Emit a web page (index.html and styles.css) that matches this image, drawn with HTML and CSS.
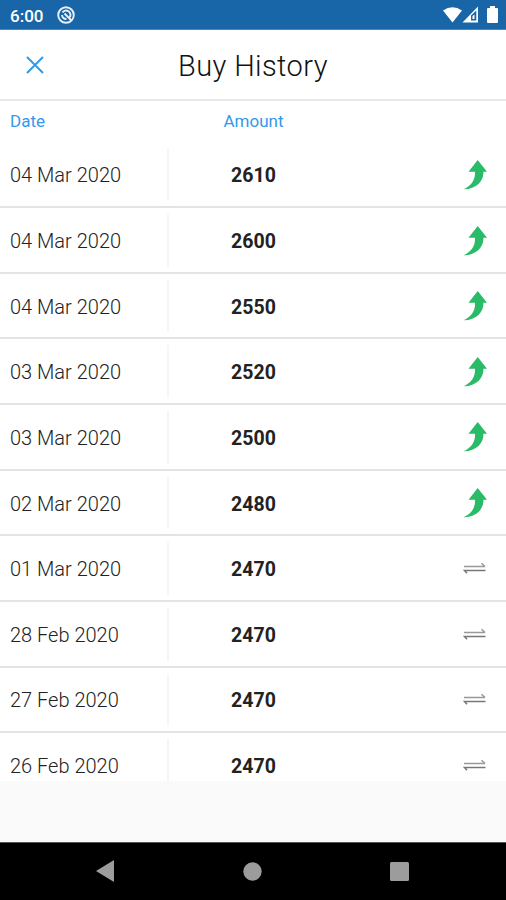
FILE: index.html
```html
<!DOCTYPE html>
<html lang="en">

<head>
    <meta charset="UTF-8">
    <meta name="viewport" content="width=device-width, initial-scale=1.0">
    <title>Buy History</title>
    <link rel="stylesheet" href="styles.css">
</head>

<body>
    <svg class="sprite" width="0" height="0">
        <symbol id="up" viewBox="0 0 26 32">
            <path d="M14.700 1L24 12.700H20.500C20.500 22 14 30 0.500 30.300C8 27 12.500 21 12 12.700H5.500Z" />
        </symbol>
        <symbol id="same" viewBox="0 0 24 12">
            <path class="same-top" d="M1 4.500H22M18.500 1.300L22 4.500" />
            <path class="same-bottom" d="M22.500 8.500H1.500L4 11.300" />
        </symbol>
    </svg>

    <div class="status-bar">
        <span class="time">6:00</span>
        <svg class="sync-icon" width="18" height="18" viewBox="0 0 18 18">
            <circle cx="9" cy="9" r="7.800" />
            <path d="M5.500 6.500A4.300 4.300 0 1 1 12.800 11.200M5 9A4.200 4.200 0 0 0 9.500 13M7.500 7.500L14.500 14.500" />
        </svg>
        <div class="status-icons">
            <svg width="19" height="16" viewBox="0 0 19 16">
                <path d="M0 3.500Q9.500 -3 19 3.500L9.500 15.500Z" />
            </svg>
            <svg width="17" height="17" viewBox="0 0 17 17">
                <path fill-rule="evenodd" d="M0.500 16.500L16 0.500V16.500ZM9 14.500V9.500L14.300 4.500V14.500Z" />
                <path d="M10.500 10L12.500 8.500V13H10.500Z" />
            </svg>
            <svg class="battery" width="11" height="17" viewBox="0 0 11 17">
                <path d="M3 0H8V2H10Q11 2 11 3V16Q11 17 10 17H1Q0 17 0 16V3Q0 2 1 2H3Z" />
            </svg>
        </div>
    </div>

    <div class="header">
        <svg class="close" width="18" height="18" viewBox="0 0 18 18">
            <path d="M1 1L17 17M17 1L1 17" />
        </svg>
        <h1>Buy History</h1>
    </div>

    <div class="columns">
        <span class="date">Date</span>
        <span class="amount">Amount</span>
    </div>

    <ul class="history">
        <li><span class="date">04 Mar 2020</span><span class="amount">2610</span><svg class="up"><use href="#up" /></svg></li>
        <li><span class="date">04 Mar 2020</span><span class="amount">2600</span><svg class="up"><use href="#up" /></svg></li>
        <li><span class="date">04 Mar 2020</span><span class="amount">2550</span><svg class="up"><use href="#up" /></svg></li>
        <li><span class="date">03 Mar 2020</span><span class="amount">2520</span><svg class="up"><use href="#up" /></svg></li>
        <li><span class="date">03 Mar 2020</span><span class="amount">2500</span><svg class="up"><use href="#up" /></svg></li>
        <li><span class="date">02 Mar 2020</span><span class="amount">2480</span><svg class="up"><use href="#up" /></svg></li>
        <li><span class="date">01 Mar 2020</span><span class="amount">2470</span><svg class="same"><use href="#same" /></svg></li>
        <li><span class="date">28 Feb 2020</span><span class="amount">2470</span><svg class="same"><use href="#same" /></svg></li>
        <li><span class="date">27 Feb 2020</span><span class="amount">2470</span><svg class="same"><use href="#same" /></svg></li>
        <li><span class="date">26 Feb 2020</span><span class="amount">2470</span><svg class="same"><use href="#same" /></svg></li>
    </ul>

    <div class="nav-bar">
        <svg width="18" height="22" viewBox="0 0 18 22">
            <path d="M0 11L18 0V22Z" />
        </svg>
        <svg width="19" height="19" viewBox="0 0 19 19">
            <circle cx="9.500" cy="9.500" r="9.200" />
        </svg>
        <svg width="19" height="19" viewBox="0 0 19 19">
            <rect width="19" height="19" rx="1.500" />
        </svg>
    </div>
</body>

</html>
```

FILE: styles.css
```css
* {
    box-sizing: border-box;
}

body {
    font-family: Roboto, sans-serif;
    background-color: #fafafa;
    color: #222;
    margin: 0;
    height: 900px;
    display: flex;
    flex-direction: column;
    overflow: hidden;
}

.sprite {
    position: absolute;
}

.status-bar {
    height: 30px;
    flex: none;
    display: flex;
    align-items: center;
    padding: 0 8px 0 10px;
    background-color: #1865a8;
    border-bottom: 1px solid #4b87bd;
    color: #fff;
}

.time {
    width: 47px;
    font-size: 17px;
    font-weight: 500;
    line-height: 20px;
    padding-top: 2px;
}

.sync-icon {
    fill: none;
    stroke: #e8f0f8;
    stroke-width: 1.900;
}

.status-icons {
    display: flex;
    align-items: center;
    margin-left: auto;
    fill: #fff;
}

.battery {
    margin-left: 8px;
}

.header {
    height: 71px;
    flex: none;
    display: flex;
    align-items: center;
    padding-left: 26px;
    background-color: #fff;
    border-bottom: 2px solid #e9e9e9;
}

.close {
    fill: none;
    stroke: #2e9be8;
    stroke-width: 2;
}

h1 {
    margin: 3px 0 0 134px;
    font-size: 29px;
    font-weight: 350;
    letter-spacing: 0.4px;
    color: #111;
}

.columns {
    height: 41px;
    flex: none;
    display: flex;
    align-items: center;
    padding-bottom: 1px;
    background-color: #fff;
    color: #3598ea;
    font-size: 17px;
}

.date {
    width: 169px;
    padding-left: 10px;
}

.amount {
    width: 169px;
    text-align: center;
}

.history {
    height: 639px;
    flex: none;
    margin: 0;
    padding: 0;
    list-style: none;
    background-color: #fff;
    overflow: hidden;
}

.history li {
    height: 65.650px;
    display: flex;
    align-items: center;
    padding: 6px 18px 5px 0;
    border-bottom: 2px solid #e4e4e4;
}

.history li:first-child {
    height: 66.200px;
}

.history .date {
    height: 100%;
    display: flex;
    align-items: center;
    padding-top: 1px;
    border-right: 2px solid #f6f6f6;
    font-size: 20px;
    font-weight: 350;
    color: #222;
}

.history .amount {
    padding-top: 2px;
    font-size: 19.500px;
    font-weight: 700;
}

.history svg {
    margin-left: auto;
}

.up {
    width: 26px;
    height: 32px;
    margin-right: -1px;
    fill: #2abb69;
}

.same {
    width: 24px;
    height: 12px;
    margin-right: 1px;
    margin-top: -1px;
    fill: none;
    stroke-width: 1.500;
}

.same-top {
    stroke: #999;
}

.same-bottom {
    stroke: #777;
}

.nav-bar {
    height: 58px;
    flex: none;
    margin-top: auto;
    display: flex;
    align-items: center;
    justify-content: space-between;
    padding: 0 97px 1px 96px;
    background-color: #000;
    border-top: 1px solid #555;
    fill: #9c9c9c;
}
```
